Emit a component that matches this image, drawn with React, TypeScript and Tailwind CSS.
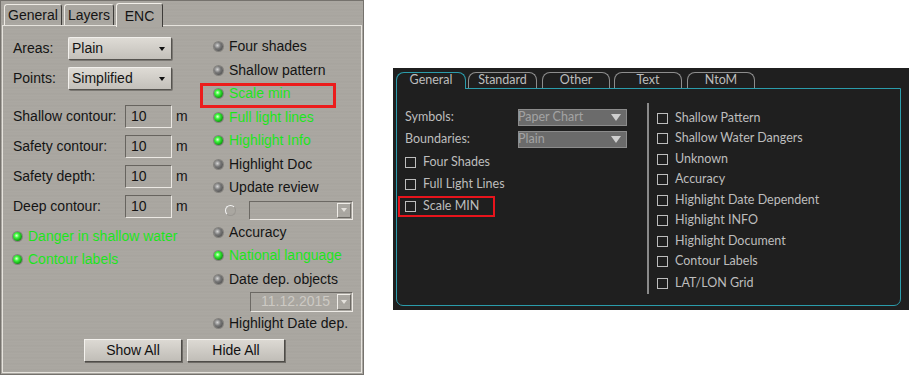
import clsx from 'clsx';

type LedProps = { on?: boolean };

const Led = ({ on }: LedProps) => (
  <span
    className={clsx(
      'inline-block h-[9px] w-[9px] shrink-0 rounded-full shadow-[0_0_0_1px_rgba(60,60,60,0.35)]',
      on
        ? 'bg-[radial-gradient(circle_at_40%_40%,#e6ffd8_0%,#3cf53c_30%,#109a10_70%,#0a3f0a_100%)]'
        : 'bg-[radial-gradient(circle_at_38%_38%,#d6d6d6_0%,#7a7a7a_40%,#3a3a3a_100%)]',
    )}
  />
);

const LedRow = ({ label, on, h }: { label: string; on?: boolean; h: string }) => (
  <div className={clsx('flex items-center', h)}>
    <Led on={on} />
    <span className={clsx('ml-[6px] whitespace-nowrap', on ? 'text-[#1de41d]' : 'text-[#141414]')}>
      {label}
    </span>
  </div>
);

const Combo = ({ value }: { value: string }) => (
  <div className="flex h-[23px] w-[104px] items-center justify-between rounded-[2px] border border-t-[#f2f0ec] border-l-[#f2f0ec] border-r-[#55534f] border-b-[#55534f] bg-[linear-gradient(#dedbd5,#c3c0ba)] pl-[3px] pr-[6px] shadow-[1px_1px_0_#7b7873]">
    <span>{value}</span>
    <span className="h-0 w-0 border-x-[3px] border-t-[4px] border-x-transparent border-t-[#111]" />
  </div>
);

const NumBox = ({ label }: { label: string }) => (
  <div className="flex h-[23px] items-center">
    <span className="w-[112px] whitespace-nowrap">{label}</span>
    <div className="flex h-[23px] w-[47px] items-center border border-t-[#67645f] border-l-[#67645f] border-r-[#ebe8e3] border-b-[#ebe8e3] pl-[5px]">
      10
    </div>
    <span className="ml-[4px]">m</span>
  </div>
);

const SunkenCombo = ({ value, w }: { value?: string; w: string }) => (
  <div
    className={clsx(
      'flex h-full items-center justify-between border border-t-[#6c6964] border-l-[#6c6964] border-r-[#eeebe6] border-b-[#eeebe6] pl-[10px]',
      w,
    )}
  >
    <span className="text-[#cdcac4]">{value}</span>
    <span className="mr-[1px] flex h-[calc(100%-2px)] w-[14px] items-center justify-center border border-t-[#f0ede8] border-l-[#f0ede8] border-r-[#6c6964] border-b-[#6c6964]">
      <span className="h-0 w-0 border-x-[3px] border-t-[4px] border-x-transparent border-t-[#e4e1dc]" />
    </span>
  </div>
);

const Button = ({ label }: { label: string }) => (
  <button className="flex h-[23px] w-[98px] items-center justify-center border border-t-[#f4f2ee] border-l-[#f4f2ee] border-r-[#4e4c48] border-b-[#4e4c48] bg-[linear-gradient(#dcd9d3,#c0bdb7)] text-[#111] shadow-[1px_1px_0_#6e6b66]">
    {label}
  </button>
);

const EncPanel = () => (
  <div className="flex h-[375px] w-[364px] shrink-0 flex-col border border-[#75726d] bg-[#a9a6a0] bg-[repeating-linear-gradient(180deg,#aaa7a1_0px,#aaa7a1_2px,#a5a29c_3px,#aca9a3_4px,#a8a59f_6px)] font-['Liberation_Sans',Arial,sans-serif] text-[14px] text-[#141414]">
    <div className="flex h-[24px] items-end pl-[3px]">
      <div className="flex h-[21px] w-[58px] items-center justify-center rounded-t-[3px] border border-b-0 border-t-[#eeebe5] border-l-[#eeebe5] border-r-[#3e3c39]">
        General
      </div>
      <div className="ml-[2px] flex h-[21px] w-[50px] items-center justify-center rounded-t-[3px] border border-b-0 border-t-[#eeebe5] border-l-[#eeebe5] border-r-[#3e3c39]">
        Layers
      </div>
      <div className="relative z-10 -mb-[2px] ml-[2px] flex h-[24px] w-[47px] items-start justify-center rounded-t-[3px] border border-b-0 border-t-[#f2efe9] border-l-[#f2efe9] border-r-[#3e3c39] bg-[#aaa7a1] pt-[2px]">
        ENC
      </div>
    </div>
    <div className="mx-[1px] mb-[1px] flex flex-1 flex-col border border-[#e6e3dd]">
      <div className="flex">
        <div className="flex w-[211px] flex-col pl-[10px] pt-[11px]">
          <div className="flex h-[23px] items-center">
            <span className="w-[55px]">Areas:</span>
            <Combo value="Plain" />
          </div>
          <div className="mt-[7px] flex h-[23px] items-center">
            <span className="w-[55px]">Points:</span>
            <Combo value="Simplified" />
          </div>
          <div className="mt-[15px] flex flex-col gap-[7px]">
            <NumBox label="Shallow contour:" />
            <NumBox label="Safety contour:" />
            <NumBox label="Safety depth:" />
            <NumBox label="Deep contour:" />
          </div>
          <div className="mt-[7px]">
            <LedRow label="Danger in shallow water" on h="h-[22px]" />
            <LedRow label="Contour labels" on h="h-[24px]" />
          </div>
        </div>
        <div className="flex flex-col pt-[9px]">
          <LedRow label="Four shades" h="h-[23.5px]" />
          <LedRow label="Shallow pattern" h="h-[23.5px]" />
          <div className="relative">
            <LedRow label="Scale min" on h="h-[23.5px]" />
            <div className="absolute left-[-14px] top-[1px] h-[25px] w-[136px] border-[3px] border-[#ec1c1c]" />
          </div>
          <LedRow label="Full light lines" on h="h-[23.5px]" />
          <LedRow label="Highlight Info" on h="h-[23.5px]" />
          <LedRow label="Highlight Doc" h="h-[23.5px]" />
          <LedRow label="Update review" h="h-[23.5px]" />
          <div className="flex h-[21px] items-center">
            <span className="ml-[11px] h-[11px] w-[11px] rounded-full border border-t-[#f4f4f4] border-l-[#f4f4f4] border-r-[#9a9792] border-b-[#9a9792]" />
            <div className="ml-[13px] h-[19px]">
              <SunkenCombo w="w-[104px]" />
            </div>
          </div>
          <LedRow label="Accuracy" h="h-[23px]" />
          <LedRow label="National language" on h="h-[24px]" />
          <LedRow label="Date dep. objects" h="h-[23px]" />
          <div className="flex h-[22px] items-center">
            <div className="ml-[36px] h-[20px]">
              <SunkenCombo value="11.12.2015" w="w-[103px]" />
            </div>
          </div>
          <LedRow label="Highlight Date dep." h="h-[22px]" />
        </div>
      </div>
      <div className="mt-[4px] flex justify-center gap-[5px] pl-[5px]">
        <Button label="Show All" />
        <Button label="Hide All" />
      </div>
    </div>
  </div>
);

const Check = ({ label }: { label: string }) => (
  <div className="flex h-full items-center">
    <span className="h-[11px] w-[11px] shrink-0 border-[1.5px] border-[#bdbdbd]" />
    <span className="ml-[7px] whitespace-nowrap">{label}</span>
  </div>
);

const DarkSelect = ({ value }: { value: string }) => (
  <div className="flex h-[17px] w-[109px] items-center justify-between border border-[#8c8c8c] bg-[#6b6b6b] pr-[5px] text-[#a3a3a3]">
    <span className="-ml-[1px] leading-none">{value}</span>
    <span className="h-0 w-0 border-x-[5px] border-t-[7px] border-x-transparent border-t-[#cfcfcf]" />
  </div>
);

const tabBase =
  'flex items-center justify-center rounded-t-[8px] border border-b-0 leading-none';

const DisplayPanel = () => (
  <div className="ml-[29px] mt-[68px] h-[242px] w-[516px] bg-[#1f1f1f] pt-[4px] font-['Lato','Open_Sans',sans-serif] text-[12.5px] text-[#bdbdbd]">
    <div className="flex h-[16px] items-end pl-[3px]">
      <div className={clsx(tabBase, 'relative z-10 -mb-px h-[17px] w-[70px] border-[#2b9cab] bg-[#1f1f1f] pb-[1px]')}>
        General
      </div>
      <div className={clsx(tabBase, 'ml-[2px] h-[16px] w-[69px] border-[#8e8e8e]')}>Standard</div>
      <div className={clsx(tabBase, 'ml-[5px] h-[16px] w-[68px] border-[#8e8e8e]')}>Other</div>
      <div className={clsx(tabBase, 'ml-[4px] h-[16px] w-[68px] border-[#8e8e8e]')}>Text</div>
      <div className={clsx(tabBase, 'ml-[5px] h-[16px] w-[68px] border-[#8e8e8e]')}>NtoM</div>
    </div>
    <div className="ml-[3px] flex h-[218px] w-[505px] rounded-b-[7px] border border-[#2b9cab]">
      <div className="flex w-[250px] flex-col pl-[8px] pt-[17px]">
        <div className="flex h-[22px] items-center">
          <span className="w-[113px]">Symbols:</span>
          <DarkSelect value="Paper Chart" />
        </div>
        <div className="flex h-[23px] items-center">
          <span className="w-[113px]">Boundaries:</span>
          <DarkSelect value="Plain" />
        </div>
        <div className="h-[22px]">
          <Check label="Four Shades" />
        </div>
        <div className="h-[22px]">
          <Check label="Full Light Lines" />
        </div>
        <div className="relative h-[22px]">
          <Check label="Scale MIN" />
          <div className="absolute left-[-7px] top-[1px] h-[21px] w-[97px] border-[2px] border-[#e8141c]" />
        </div>
      </div>
      <div className="mt-[14px] h-[191px] w-[2px] bg-[#8a8a8a]" />
      <div className="flex flex-col pl-[8px] pt-[19px]">
        {[
          'Shallow Pattern',
          'Shallow Water Dangers',
          'Unknown',
          'Accuracy',
          'Highlight Date Dependent',
          'Highlight INFO',
          'Highlight Document',
          'Contour Labels',
        ].map((label) => (
          <div key={label} className="h-[20.5px]">
            <Check label={label} />
          </div>
        ))}
        <div className="h-[23px]">
          <Check label="LAT/LON Grid" />
        </div>
      </div>
    </div>
  </div>
);

export default function App() {
  return (
    <div className="flex h-[378px] w-[909px] items-start overflow-hidden bg-white">
      <EncPanel />
      <DisplayPanel />
    </div>
  );
}
